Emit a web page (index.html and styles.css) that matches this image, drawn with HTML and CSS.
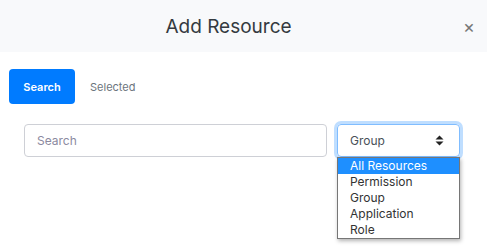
FILE: index.html
```html
<!DOCTYPE html>
<html>
<head>
<meta charset="utf-8">
<link rel="stylesheet" href="styles.css">
</head>
<body>
<div class="modal">
  <header class="modal-header">
    <h1 class="title">Add Resource</h1>
    <button class="close" aria-label="Close">&times;</button>
  </header>
  <div class="modal-body">
    <div class="tabs">
      <button class="tab tab-active">Search</button>
      <button class="tab">Selected</button>
    </div>
    <div class="filters">
      <input class="search-input" type="text" placeholder="Search">
      <div class="select-wrap">
        <div class="select">
          <span>Group</span>
          <svg class="caret" width="9" height="11" viewBox="0 0 9 11"><path d="M4.5 0.5 L8.5 4.5 H0.5 Z M4.5 10.5 L8.5 6.5 H0.5 Z" fill="#222"/></svg>
        </div>
        <ul class="options">
          <li class="option option-active">All Resources</li>
          <li class="option">Permission</li>
          <li class="option">Group</li>
          <li class="option">Application</li>
          <li class="option">Role</li>
        </ul>
      </div>
    </div>
  </div>
</div>
</body>
</html>
```
FILE: styles.css
```css
* { box-sizing: border-box; }
html, body { margin: 0; padding: 0; background: #fff; }
body { font-family: Inter, "Noto Sans", sans-serif; }

.modal { width: 487px; height: 248px; }

.modal-header {
  height: 52px;
  background: #f8f9fb;
  display: flex;
  align-items: center;
}
.title {
  flex: 1;
  margin: 0;
  text-align: center;
  font-size: 19px;
  font-weight: 400;
  color: #343a40;
}
.close {
  width: 24px;
  margin-right: 6px;
  border: 0;
  background: none;
  font-family: Inter, sans-serif;
  font-size: 18px;
  line-height: 1;
  color: #777;
  padding: 0;
  margin-top: 1px;
}

.modal-body { padding: 17px 9px 0; }

.tabs { display: flex; align-items: center; }
.tab {
  border: 0;
  background: none;
  font-family: Inter, sans-serif;
  font-size: 11px;
  color: #6c757d;
  height: 35px;
  padding: 0 15px;
  border-radius: 4px;
}
.tab-active {
  width: 66px;
  padding: 0;
  background: #007bff;
  color: #fff;
  font-weight: 600;
}

.filters {
  display: flex;
  gap: 10px;
  margin-top: 20px;
  padding-left: 15px;
}
.search-input {
  width: 303px;
  height: 33px;
  border: 1px solid #ced0d6;
  border-radius: 4px;
  padding: 0 12px;
  font-family: Inter, sans-serif;
  font-size: 12px;
  color: #333;
}
.search-input::placeholder { color: #8b8aa0; }

.select-wrap { position: relative; width: 123px; }
.select {
  height: 33px;
  border: 1px solid #80bdff;
  border-radius: 4px;
  box-shadow: 0 0 0 3px rgba(0,123,255,0.25);
  display: flex;
  align-items: center;
  justify-content: space-between;
  padding: 0 15px 0 12px;
  font-size: 12px;
  color: #495057;
}
.caret { display: block; }

.options {
  position: absolute;
  top: 33px;
  left: 0;
  width: 123px;
  margin: 0;
  padding: 0;
  list-style: none;
  background: #fff;
  border: 1px solid #767676;
  box-shadow: 1px 2px 4px rgba(0,0,0,0.3);
}
.option {
  height: 16px;
  line-height: 16px;
  padding-left: 12px;
  font-size: 12px;
  color: #333;
}
.option-active { background: #1e8fff; color: #fff; }
```
